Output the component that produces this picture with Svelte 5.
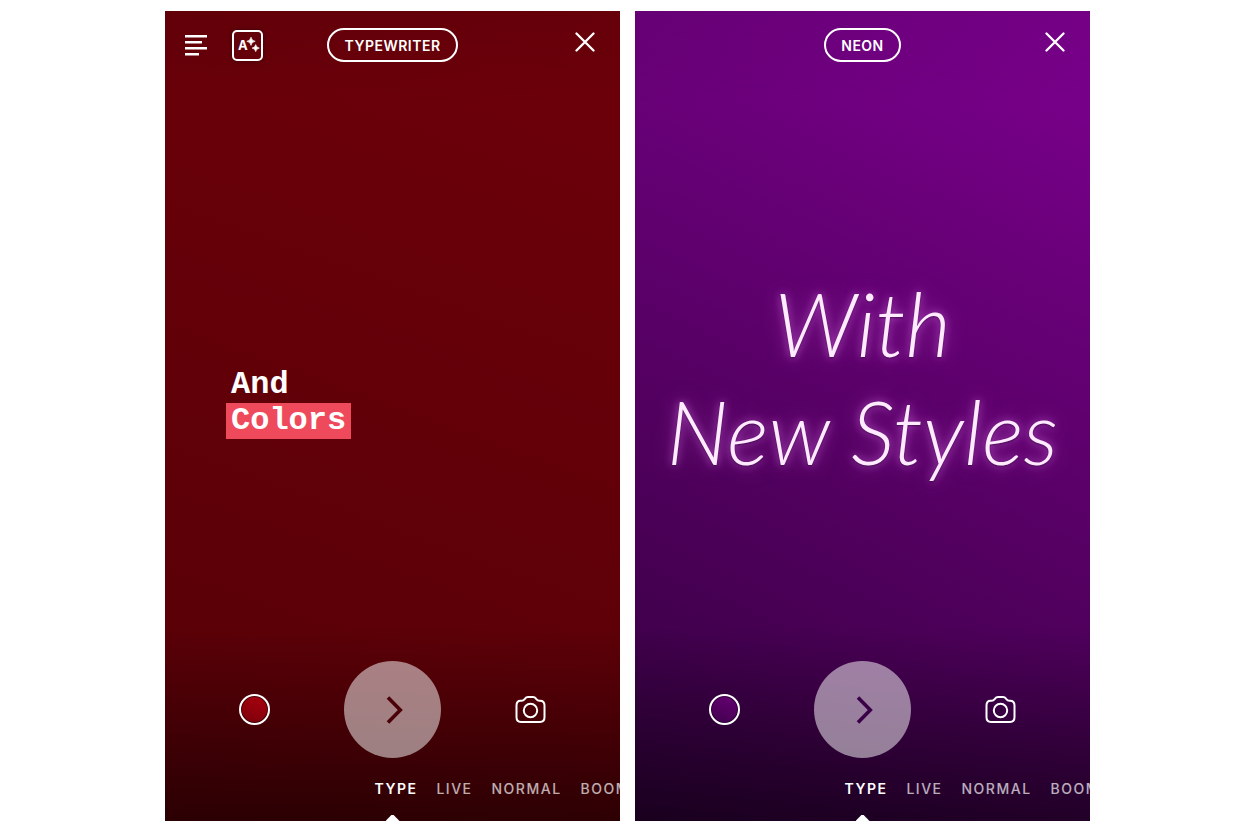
<script>
  const screens = [
    { id: 'typewriter', label: 'TYPEWRITER', tools: true, lines: ['And', 'Colors'] },
    { id: 'neon', label: 'NEON', tools: false, lines: ['With', 'New Styles'] }
  ];
  const modes = ['TYPE', 'LIVE', 'NORMAL', 'BOOMERANG'];
</script>

<main>
  {#each screens as screen (screen.id)}
    <section class="phone {screen.id}" aria-label={screen.label}>
      <header>
        <div class="tools">
          {#if screen.tools}
            <button class="align" aria-label="Text alignment">
              <svg width="22" height="22" viewBox="0 0 22 22">
                <path d="M0 2.200H22M0 8.300H17M0 14.300H22M0 20.300H14" stroke="#fff" stroke-width="2.400" />
              </svg>
            </button>
            <button class="effects" aria-label="Text effects">
              <span>A</span>
              <svg width="16" height="17" viewBox="0 0 16 17" fill="#fff">
                <path d="M5 0.200Q5.500 3.800 9.200 4.300Q5.500 4.800 5 8.400Q4.500 4.800 0.800 4.300Q4.500 3.800 5 0.200Z" stroke="#fff" stroke-width=".7" />
                <path d="M9.700 7.600Q10.200 10.600 13.300 11.100Q10.200 11.600 9.700 14.600Q9.200 11.600 6.100 11.100Q9.200 10.600 9.700 7.600Z" stroke="#fff" stroke-width=".7" />
              </svg>
            </button>
          {/if}
        </div>
        <button class="pill">{screen.label}</button>
        <button class="close" aria-label="Close">
          <svg width="20" height="20" viewBox="0 0 20 20">
            <path d="M1.500 1.500L18.500 18.500M18.500 1.500L1.500 18.500" stroke="#fff" stroke-width="2.300" stroke-linecap="round" />
          </svg>
        </button>
      </header>

      <div class="stage">
        <p>
          {#each screen.lines as line}
            <span>{line}</span>
          {/each}
        </p>
      </div>

      <div class="controls">
        <button class="swatch" aria-label="Background colour"><i></i></button>
        <button class="next" aria-label="Next">
          <svg width="17" height="28" viewBox="0 0 17 28" fill="none">
            <path d="M2 1.500L14.300 14L2 26.500" stroke="currentColor" stroke-width="3.600" />
          </svg>
        </button>
        <button class="camera" aria-label="Camera">
          <svg width="31" height="28" viewBox="0 0 31 28" fill="none" stroke="#fff" stroke-width="2">
            <path d="M5.500 4.700H6.500C8.600 4.700 9 3.900 10 2.700C10.900 1.500 11.600 1.100 13 1.100H18C19.400 1.100 20.100 1.500 21 2.700C22 3.900 22.400 4.700 24.500 4.700H25C28.300 4.700 29.500 6.500 29.500 9.500V21.200C29.500 24.400 28 25.900 25 25.900H6C3 25.900 1.500 24.400 1.500 21.200V9.500C1.500 6.500 2.800 4.700 5.500 4.700Z" />
            <circle cx="15.500" cy="14.500" r="6.700" />
          </svg>
        </button>
      </div>

      <nav aria-label="Camera modes">
        {#each modes as mode, i}
          <button class:active={i === 0}>{mode}</button>
        {/each}
      </nav>
      <i class="marker"></i>
    </section>
  {/each}
</main>

<style>
  :global(body) {
    margin: 0;
    background: #fff;
  }
  main {
    display: grid;
    grid-template-columns: repeat(2, minmax(0, 455px));
    justify-content: center;
    gap: 15px;
    padding: 11px 5px 19px 0;
    font-family: Inter, "Liberation Sans", sans-serif;
    color: #fff;
  }
  button {
    display: block;
    margin: 0;
    padding: 0;
    border: 0;
    background: none;
    color: inherit;
    font: inherit;
    cursor: pointer;
  }
  svg {
    display: block;
  }
  .phone {
    position: relative;
    display: flex;
    flex-direction: column;
    box-sizing: border-box;
    aspect-ratio: 455 / 810;
    overflow: hidden;
  }
  .typewriter {
    --ink: #4a0006;
    --dot: linear-gradient(200deg, #a8000e, #7c000a);
    background:
      linear-gradient(to bottom, rgba(0, 0, 0, 0.08), transparent 12%, transparent 76%, rgba(0, 0, 0, 0.5)),
      linear-gradient(200deg, #6e000a, #560006);
  }
  .neon {
    --ink: #3a0048;
    --dot: linear-gradient(200deg, #650073, #42004e);
    background:
      linear-gradient(to bottom, rgba(0, 0, 0, 0.08), transparent 12%, transparent 76%, rgba(0, 0, 0, 0.5)),
      linear-gradient(205deg, #7e0090, #33003d);
  }
  header {
    display: grid;
    grid-template-columns: 1fr auto 1fr;
    align-items: center;
    padding: 17px 20px 12px;
  }
  .tools {
    display: flex;
    align-items: center;
    gap: 25px;
  }
  .effects {
    display: flex;
    align-items: center;
    box-sizing: border-box;
    width: 31px;
    height: 31px;
    padding-left: 4px;
    border: 2px solid #fff;
    border-radius: 5px;
    box-shadow: 0 0 4px rgba(0, 0, 0, 0.4);
  }
  .effects span {
    width: 8px;
    font-size: 13px;
    font-weight: 700;
  }
  .effects svg {
    flex: none;
  }
  .pill {
    box-sizing: border-box;
    height: 34px;
    padding: 0 15px;
    border: 2px solid #fff;
    border-radius: 17px;
    font-size: 14px;
    font-weight: 600;
    letter-spacing: 0.5px;
  }
  .close {
    justify-self: end;
    padding: 0 5px 6px 0;
  }
  .stage {
    flex: 1;
    display: flex;
    align-items: center;
  }
  p {
    display: flex;
    flex-direction: column;
    margin: 0;
  }
  .typewriter .stage {
    padding: 70px 61px 0;
  }
  .typewriter p {
    align-items: flex-start;
    font: 700 32px/36px "Liberation Mono", monospace;
  }
  .typewriter p span {
    padding: 0 5px;
  }
  .typewriter p span:last-child {
    background: #ee4a5c;
  }
  .neon .stage {
    justify-content: center;
    padding-top: 18px;
  }
  .neon p {
    align-items: center;
    font: italic 300 88px/108px Lato, sans-serif;
    white-space: nowrap;
    color: #ffeaff;
    text-shadow:
      0 1px 2px rgba(40, 0, 50, 0.6),
      0 0 8px rgba(220, 120, 235, 0.6),
      0 0 20px rgba(210, 90, 225, 0.6);
  }
  .controls {
    display: flex;
    justify-content: center;
    align-items: center;
    gap: 74px;
  }
  .swatch {
    display: grid;
    place-items: center;
    box-sizing: border-box;
    width: 31px;
    height: 31px;
    border: 2px solid #fff;
    border-radius: 50%;
  }
  .swatch i {
    width: 25px;
    height: 25px;
    border-radius: 50%;
    background: var(--dot);
  }
  .next {
    display: grid;
    place-items: center;
    box-sizing: border-box;
    width: 97px;
    height: 97px;
    padding-left: 4px;
    border-radius: 50%;
    background: rgba(255, 255, 255, 0.5);
    color: var(--ink);
  }
  nav {
    display: flex;
    gap: 19px;
    padding: 21px 0 22px calc(50% - 18px);
  }
  nav button {
    font-size: 14px;
    line-height: 20px;
    font-weight: 500;
    letter-spacing: 1.5px;
    opacity: 0.68;
  }
  nav .active {
    font-weight: 600;
    opacity: 1;
  }
  .marker {
    position: absolute;
    bottom: 0;
    left: 50%;
    width: 14px;
    height: 6px;
    margin-left: -7px;
    background: #fff;
    clip-path: polygon(42% 0, 58% 0, 100% 100%, 0 100%);
  }
</style>
